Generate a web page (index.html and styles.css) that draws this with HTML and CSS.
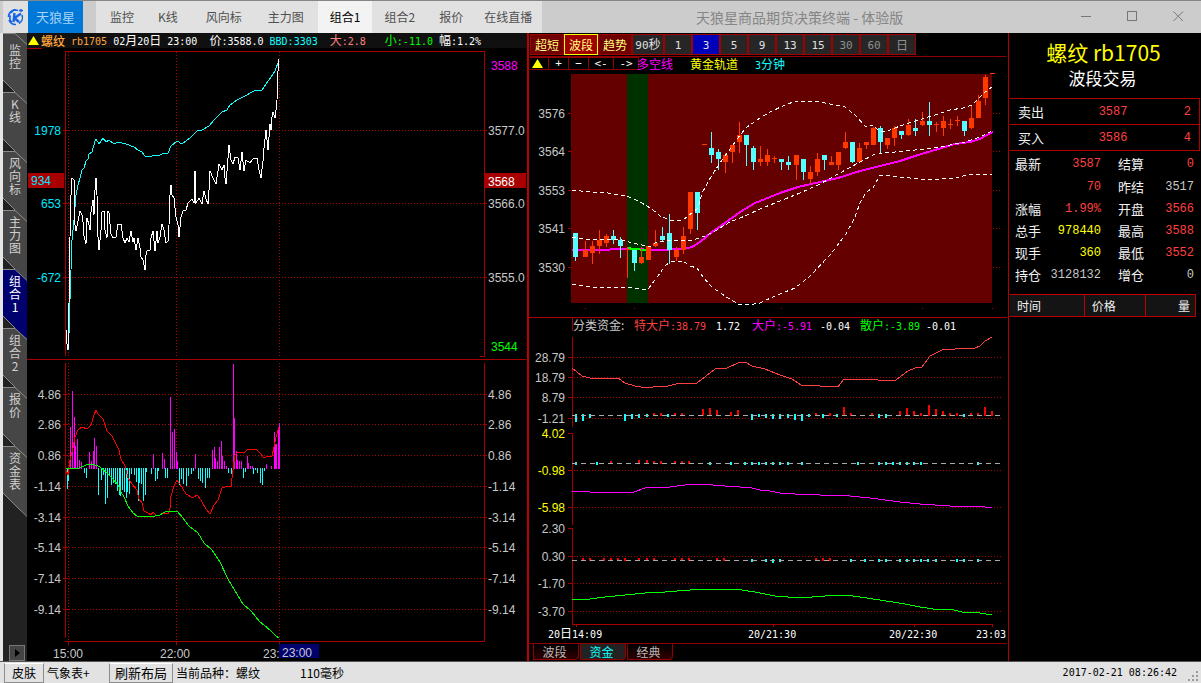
FILE: index.html
```html
<!DOCTYPE html>
<html lang="zh-CN">
<head>
<meta charset="utf-8">
<title>天狼星商品期货决策终端 - 体验版</title>
<link rel="stylesheet" href="styles.css">
</head>
<body>
<svg class="defs" aria-hidden="true">
  <symbol id="tab-shape" viewBox="0 0 24 59">
    <rect class="tab-gap" width="24" height="59"/>
    <path class="tab-body" d="M0 0H24V59H12L0 47Z"/>
    <path class="tab-prev" d="M12 0H24V11Z"/>
    <path class="tab-line" d="M0 47L12 59M0 .5H12L24 11.500"/>
  </symbol>
</svg>
<div class="app">
  <header class="titlebar">
    <div class="logo">
      <svg width="17" height="17" viewBox="0 0 17 17" aria-hidden="true">
        <g fill="none" stroke="#1464e6" stroke-width="1.600">
          <path d="M11 1.500A7 7 0 0 0 1.500 8M2 11A7 7 0 0 0 9 15.500"/>
          <path d="M12 14.500A7 7 0 0 0 15 6" />
          <path d="M9 .5A6 6 0 0 0 4 4M5 13.500A6 6 0 0 1 3.500 6.500"/>
          <path stroke-width="2.400" d="M7.500 4L6.500 13M14 4.500L7.500 9L12 13"/>
          <path stroke-width="1.300" d="M12 1.500H16M14 0V3"/>
        </g>
      </svg>
    </div>
    <button class="brand">天狼星</button>
    <nav class="menu">
      <button>监控</button><button>K线</button><button>风向标</button><button>主力图</button><button class="active">组合1</button><button>组合2</button><button>报价</button><button>在线直播</button>
    </nav>
    <h1 class="app-title">天狼星商品期货决策终端 - 体验版</h1>
    <div class="window-buttons">
      <button aria-label="最小化"><svg width="11" height="11"><path d="M0 5.500H10"/></svg></button>
      <button aria-label="最大化"><svg width="11" height="11"><path d="M.5 .5H9.500V9.500H.5Z"/></svg></button>
      <button aria-label="关闭"><svg class="smooth" width="11" height="11"><path d="M.5 .5L10 10M10 .5L.5 10"/></svg></button>
    </div>
  </header>

  <main class="workspace">
    <aside class="sidebar">
      <nav class="side-tabs">
        <button class="first"><svg><use href="#tab-shape"/></svg><span>监控</span></button>
        <button><svg><use href="#tab-shape"/></svg><span>K线</span></button>
        <button><svg><use href="#tab-shape"/></svg><span>风向标</span></button>
        <button><svg><use href="#tab-shape"/></svg><span>主力图</span></button>
        <button class="active"><svg><use href="#tab-shape"/></svg><span>组合1</span></button>
        <button class="after-active"><svg><use href="#tab-shape"/></svg><span>组合2</span></button>
        <button><svg><use href="#tab-shape"/></svg><span>报价</span></button>
        <button><svg><use href="#tab-shape"/></svg><span>资金表</span></button>
        <svg class="tab-tail" viewBox="0 0 24 14" aria-hidden="true"><path class="tab-body" d="M12 0H24V11Z"/><path class="tab-line" d="M12 0L24 11.500"/></svg>
      </nav>
      <button class="side-arrow" aria-label="展开"><svg width="5" height="8"><path d="M0 0L5 4L0 8Z"/></svg></button>
    </aside>

    <section class="pane trend-pane">
      <div class="quote-strip">
        <svg width="11" height="10" aria-hidden="true"><path fill="#ff0" d="M5.500 0L11 9H0Z"/></svg>
        <span class="orange strong">螺纹</span>
        <span class="orange"><b>rb1705</b></span>
        <span><b>02</b>月<b>20</b>日</span>
        <span><b>23:00</b></span>
        <span class="wide">价<b>:3588.0</b></span>
        <span class="cyan"><b>BBD:3303</b></span>
        <span class="wide pink">大<b>:2.8</b></span>
        <span class="wider green">小<b>:-11.0</b></span>
        <span>幅<b>:1.2%</b></span>
      </div>
      <svg class="chart" id="trend" viewBox="27 48 500 613" role="img" aria-label="分时走势"></svg>
    </section>

    <section class="pane kline-pane">
      <div class="periods">
        <button class="mode">超短</button><button class="mode on">波段</button><button class="mode">趋势</button><button class="seconds"><b>90</b>秒</button><button><b>1</b></button><button class="on"><b>3</b></button><button><b>5</b></button><button><b>9</b></button><button><b>13</b></button><button><b>15</b></button><button class="dim"><b>30</b></button><button class="dim"><b>60</b></button><button class="dim">日</button>
      </div>
      <div class="tools">
        <button class="narrow" aria-label="上移"><svg width="11" height="10"><path fill="#ff0" d="M5.500 0L11 9H0Z"/></svg></button><button>+</button><button>−</button><button class="long">&lt;-</button><button class="long">-&gt;</button>
        <span class="magenta">多空线</span><span class="yellow">黄金轨道</span><span class="cyan"><b>3</b>分钟</span>
      </div>
      <svg class="chart" id="kline" viewBox="529 70 479 573" role="img" aria-label="K线与分类资金">
        <g class="cjk">
          <text x="573" y="330" class="f-gray">分类资金:</text>
          <text x="634" y="330" class="f-red">特大户<tspan class="n">:38.79</tspan></text>
          <text x="716" y="330" class="f-white n">1.72</text>
          <text x="752" y="330" class="f-magenta">大户<tspan class="n">:-5.91</tspan></text>
          <text x="820" y="330" class="f-white n">-0.04</text>
          <text x="860" y="330" class="f-green">散户<tspan class="n">:-3.89</tspan></text>
          <text x="926" y="330" class="f-white n">-0.01</text>
          <text x="548" y="638" class="f-white"><tspan class="n">20</tspan>日<tspan class="n">14:09</tspan></text>
          <text x="748" y="638" class="f-white n">20/21:30</text>
          <text x="889" y="638" class="f-white n">20/22:30</text>
          <text x="976" y="638" class="f-white n">23:03</text>
        </g>
      </svg>
      <div class="bottom-tabs">
        <button>波段</button><button class="on">资金</button><button>经典</button>
      </div>
    </section>

    <section class="pane quote-pane">
      <h2>螺纹 rb1705</h2>
      <p class="subtitle">波段交易</p>
      <table class="book">
        <tr><th>卖出</th><td>3587</td><td>2</td></tr>
        <tr><th>买入</th><td>3586</td><td>4</td></tr>
      </table>
      <table class="stats">
        <tr class="tall"><th>最新</th><td>3587</td><th>结算</th><td>0</td></tr>
        <tr><th></th><td>70</td><th>昨结</th><td class="plain">3517</td></tr>
        <tr><th>涨幅</th><td>1.99%</td><th>开盘</th><td>3566</td></tr>
        <tr><th>总手</th><td class="yellow">978440</td><th>最高</th><td>3588</td></tr>
        <tr><th>现手</th><td class="yellow">360</td><th>最低</th><td>3552</td></tr>
        <tr><th>持仓</th><td class="plain">3128132</td><th>增仓</th><td class="plain">0</td></tr>
      </table>
      <table class="ticks">
        <tr><th>时间</th><th>价格</th><th>量</th></tr>
      </table>
    </section>
  </main>

  <footer class="statusbar">
    <button>皮肤</button>
    <span class="weather">气象表+</span>
    <button class="layout">刷新布局</button>
    <span class="symbol">当前品种：螺纹</span>
    <span>110毫秒</span>
    <time>2017-02-21 08:26:42</time>
    <svg class="grip" width="10" height="10" aria-hidden="true"><path d="M8 0h2v2h-2zM4 4h2v2h-2zM8 4h2v2h-2zM0 8h2v2h-2zM4 8h2v2h-2zM8 8h2v2h-2z"/></svg>
  </footer>
</div>
<script src="charts.js"></script>
</body>
</html>
```
FILE: styles.css
```css
* { box-sizing: border-box; }

body {
  margin: 0;
  background: #000;
  color: #fff;
  font: 12px/16px "Noto Sans CJK SC", sans-serif;
}

button {
  margin: 0;
  padding: 0;
  border: 0;
  background: none;
  color: inherit;
  font: inherit;
  white-space: nowrap;
}

b, .n {
  font-family: "DejaVu Sans Mono", monospace;
  font-size: 10px;
  font-weight: 400;
}

.defs { position: absolute; width: 0; height: 0; }

.app {
  display: flex;
  flex-direction: column;
  height: 100vh;
  overflow: hidden;
}

/* Title bar */
.titlebar {
  display: flex;
  flex: none;
  height: 33px;
  padding-left: 3px;
  border-top: 1px solid #858585;
  background: #ccc;
}
.logo {
  display: flex;
  align-items: center;
  justify-content: center;
  width: 25px;
  background: #e0e0e0;
}
.brand {
  width: 55px;
  margin-right: 13px;
  background: #0078d7;
  color: #a8d4f8;
  font-size: 13px;
}
.menu { display: flex; background: #e1e1e1; color: #505050; }
.menu button { padding: 0 12px; }
.menu button:nth-child(1) { padding-left: 14px; }
.menu button:nth-child(2) { padding-right: 16px; }
.menu button:nth-child(3) { padding-right: 14px; }
.menu button:nth-child(4) { padding-right: 14px; }
.menu button:nth-child(7) { padding-right: 9px; }
.menu button:nth-child(8) { padding-right: 10px; }
.menu .active { background: #f3f3f3; color: #000; }
.app-title {
  flex: 1;
  margin: 0;
  padding-right: 6px;
  color: #858585;
  font-size: 14px;
  font-weight: 400;
  line-height: 32px;
  text-align: center;
  white-space: nowrap;
}
.window-buttons { display: flex; }
.window-buttons button { width: 46px; }
.window-buttons path {
  fill: none;
  stroke: #777;
  shape-rendering: crispEdges;
}
.window-buttons .smooth path { shape-rendering: auto; }

/* Workspace */
.workspace {
  display: grid;
  flex: 1;
  grid-template-columns: 27px minmax(0, 500fr) minmax(0, 481fr) minmax(0, 193fr);
  min-height: 0;
}
.pane { display: flex; flex-direction: column; min-width: 0; min-height: 0; }
.chart { display: block; flex: 1; width: 100%; min-height: 0; }

/* Sidebar */
.sidebar {
  display: flex;
  flex-direction: column;
  justify-content: space-between;
  border-left: 3px solid #e6e6e6;
  background: #222;
  --tab-fill: #464646;
  --prev-fill: #464646;
}
.side-tabs { display: flex; flex-direction: column; }
.side-tabs button {
  display: grid;
  width: 24px;
  height: 59px;
  color: #d0d0d0;
}
.side-tabs button > * { grid-area: 1 / 1; }
.side-tabs button > svg { width: 24px; height: 59px; }
.side-tabs span {
  width: 14px;
  padding-top: 5px;
  margin: 0 auto;
  font-size: 12px;
  line-height: 13px;
  white-space: normal;
  word-break: break-all;
}
.side-tabs .first span { padding-top: 10px; }
.side-tabs .active { --tab-fill: #00006e; color: #fff; }
.side-tabs .after-active { --prev-fill: #00006e; }
.tab-tail { width: 24px; height: 14px; }
.tab-gap { fill: #222; }
.tab-body { fill: var(--tab-fill); }
.tab-prev { fill: var(--prev-fill); }
.tab-line { fill: none; stroke: #8c8c8c; }
.side-arrow {
  width: 16px;
  height: 16px;
  margin-left: 6px;
  border: 1px solid #777;
  background: #444;
  line-height: 0;
}
.side-arrow path { fill: #000; }

/* Trend pane */
.quote-strip {
  display: flex;
  flex: none;
  gap: 6px;
  align-items: center;
  height: 15px;
  padding: 1px 0 0 1px;
  background: #101010;
  white-space: nowrap;
}
.quote-strip svg + span { margin-left: -4px; }
.strong { font-weight: 500; }
.orange { color: #ffa73d; }
.cyan { color: #1ff; }
.pink { color: #ff8080; }
.green { color: #0f0; }
.magenta { color: #f0f; }
.yellow { color: #ff0; }
.quote-strip .wide { margin-left: 6px; }
.quote-strip .wider { margin-left: 13px; }

/* K-line pane */
.kline-pane { border-left: 2px solid #c00000; }
.periods {
  display: flex;
  flex: none;
  height: 23px;
  padding: 1px 0 1px 1px;
}
.periods button {
  width: 28px;
  border: 1px solid #a00000;
  background: #262626;
  color: #e0e0e0;
  line-height: 16px;
}
.periods b { font-size: 11px; }
.periods .on { background: #0000b8; }
.periods .dim { color: #909090; }
.periods .seconds { width: 32px; }
.periods .mode { width: 34px; background: #6e0000; color: #ffff80; }
.periods .mode.on { border-color: #ff0; background: #a00000; }
.tools {
  display: flex;
  flex: none;
  height: 14px;
  margin: 0 2px 0 1px;
  border-top: 1px solid #900000;
  line-height: 13px;
}
.tools button {
  width: 20px;
  border: 1px solid #900000;
  border-left: 0;
  font: 11px/10px "DejaVu Sans Mono", monospace;
}
.tools .narrow { width: 19px; line-height: 0; padding-right: 4px; }
.tools .long { width: 25px; }
.tools span { margin-right: 17px; }
.tools .magenta { margin-left: -2px; }
.bottom-tabs {
  display: flex;
  flex: none;
  gap: 1px;
  height: 18px;
  padding: 0 3px 1px;
  border-top: 1px solid #900000;
  margin: 0 2px 0 1px;
}
.bottom-tabs button {
  width: 46px;
  padding-right: 3px;
  border: 1px solid #900000;
  border-top: 0;
  border-bottom-right-radius: 4px;
  background: linear-gradient(#000, #300000);
  color: #b8b8b8;
  line-height: 14px;
}
.bottom-tabs .on { background: #222; color: #1ff; }

/* Chart marks */
.chart * { shape-rendering: crispEdges; }
.chart polyline { fill: none; stroke-width: 1; }
.axis { fill: none; stroke: #a80000; }
.grid { fill: none; stroke: #b00000; stroke-dasharray: 1 2; }
.zero { stroke: #aaa; stroke-dasharray: 5 4; }
.scale { font: 12px "Liberation Sans", sans-serif; }
.cjk { font: 12px "Noto Sans CJK SC", sans-serif; }
.f-gray { fill: #c8c8c8; }
.f-red { fill: #ff4040; }
.f-white { fill: #fff; }
.f-magenta { fill: #f0f; }
.f-green { fill: #0f0; }
.f-cyan { fill: #00e8ff; }
.f-yellow { fill: #ff0; }

/* Quote pane */
.quote-pane { padding-left: 1px; border-left: 1px solid #b00000; }
.quote-pane h2 {
  margin: 5px 0 0;
  padding-right: 4px;
  color: #ff0;
  font-size: 21px;
  font-weight: 400;
  line-height: 28px;
  text-align: center;
}
.subtitle {
  margin: 0 0 8px;
  padding-right: 6px;
  font-size: 17px;
  line-height: 24px;
  text-align: center;
}
.quote-pane table { border-collapse: collapse; table-layout: fixed; }
.quote-pane th {
  padding: 0;
  color: #f0f0f0;
  font-size: 13px;
  font-weight: 400;
  text-align: left;
}
.quote-pane td {
  padding: 0;
  color: #ff4040;
  font: 12px/16px "Liberation Mono", monospace;
  text-align: right;
}
.quote-pane td.plain { color: #c8c8c8; }
.quote-pane td.yellow { color: #ff0; }
.book { margin-right: 1px; }
.book tr { height: 26px; border: 1px solid #b00000; border-left: 0; }
.book th { width: 35%; padding-left: 8px; }
.quote-pane .book td:last-child { padding-right: 8px; }
.book td:nth-child(2) { width: 27%; }
.stats { margin: 1px 7px 0 5px; }
.stats tr { height: 22px; }
.stats .tall { height: 24px; }
.stats th:first-child { width: 20%; }
.quote-pane .stats th:nth-child(3) { width: 36%; padding-left: 17px; }
.stats td:nth-child(2) { width: 28%; }
.ticks { margin: 8px 5px 0 0; background: #141414; }
.ticks tr { height: 22px; }
.quote-pane .ticks th { border: 1px solid #c00000; border-left: 0; padding: 0 7px; font-size: 12px; }
.ticks th:nth-child(1) { width: 40%; }
.ticks th:nth-child(2) { width: 33%; }
.quote-pane .ticks th:nth-child(3) { padding-right: 5px; text-align: right; }

/* Status bar */
.statusbar {
  display: flex;
  flex: none;
  align-items: center;
  height: 22px;
  padding: 0 3px 0 4px;
  border-top: 1px solid #555;
  background: #e2e2e2;
  color: #000;
  white-space: nowrap;
}
.statusbar button {
  width: 40px;
  height: 20px;
  border: 1px solid #8c8c8c;
  border-top-color: #fff;
  line-height: 16px;
}
.statusbar .weather { width: 62px; margin-left: 3px; }
.statusbar .layout { width: 64px; margin-right: 3px; font-size: 13px; }
.statusbar .symbol { width: 124px; }
.statusbar time {
  margin-left: auto;
  font: 10px "DejaVu Sans Mono", monospace;
}
.grip { align-self: flex-end; margin: 0 0 2px 11px; }
.grip path { fill: #999; }
```
FILE: charts.js
```js
const NS = 'http://www.w3.org/2000/svg';

function add(parent, tag, attrs, text) {
  const el = document.createElementNS(NS, tag);
  for (const key in attrs) el.setAttribute(key, attrs[key]);
  if (text) el.textContent = text;
  parent.appendChild(el);
  return el;
}
const line = (svg, points, stroke, extra) =>
  add(svg, 'polyline', Object.assign({ points, stroke }, extra));
const box = (svg, x, y, width, height, fill) =>
  add(svg, 'rect', { x, y, width, height, fill });
const label = (svg, x, y, text, cls, anchor) =>
  add(svg, 'text', { x, y: y + 5, class: 'scale ' + cls, 'text-anchor': anchor || 'start' }, text);
const path = (svg, d, cls) => add(svg, 'path', { d, class: cls });

/* Intraday trend */
const t = document.getElementById('trend');
path(t, 'M68.5 52V356M176.5 52V356M279.5 52V356M68.5 363V641M176.5 363V641M279.5 363V641', 'grid');
[130, 203, 277, 394, 424, 455, 486, 517, 547, 578, 609].forEach(y => {
  path(t, `M66 ${y}.5H484`, 'grid');
  path(t, `M63 ${y}.5H68M484 ${y}.5H487`, 'axis');
});
path(t, 'M27 48.5H42M65.5 356V51.5H484.5V356.5H480M27 359.5H526M65.5 363V638M484.500 363V641M65 641.5H485M68.5 641V645M176.5 641V645M279.5 641V645', 'axis');

const upBars = [[70,427],[72,391],[74,417],[75,446],[77,439],[79,460],[81,462],[89,452],[91,461],[93,451],[94,438],[96,446],[153,454],[162,453],[164,459],[170,397],[172,432],[174,429],[176,452],[177,461],[195,454],[212,450],[214,447],[215,458],[217,461],[219,447],[221,441],[222,456],[224,461],[226,466],[233,364],[234,418],[236,451],[237,460],[239,461],[241,461],[247,456],[248,463],[250,466],[252,466],[266,464],[271,466],[274,432],[275,444],[276,444],[278,430],[279,423]];
upBars.forEach(([x, y]) => box(t, x, y, 1, 469 - y, '#f0f'));
const downBars = [[67,489],[68,481],[84,473],[86,478],[98,495],[101,480],[103,475],[105,504],[107,498],[109,475],[111,485],[113,483],[115,484],[117,491],[119,495],[120,496],[122,490],[124,492],[126,498],[127,492],[129,494],[131,474],[134,475],[136,482],[138,501],[139,483],[141,484],[143,501],[145,495],[146,472],[151,474],[155,481],[157,479],[158,471],[165,478],[167,478],[179,485],[181,479],[183,484],[186,486],[188,476],[191,474],[193,471],[198,479],[200,481],[202,483],[205,488],[207,478],[209,478],[228,473],[231,474],[243,478],[245,472],[253,474],[255,470],[257,473],[260,483],[262,485],[264,471]];
downBars.forEach(([x, y]) => box(t, x, 468, 1, y - 468, '#1ff'));

line(t, '68,350 69,333 70,300 71,270 72,240 74,220 76,195 78,185 80,178 82,170 84,168 86,161 88,159 89,154 92,152 95,141 96,139 99,144 101,141 103,138 106,142 109,140 114,144 118,142 122,143 126,144 134,147 138,150 142,152 145,156 150,157 154,155 158,156 162,154 168,153 171,146 177,141 182,144 190,138 197,131 202,130 209,126 215,119 222,112 227,110 230,105 237,100 245,96 254,91 262,90 266,84 271,77 275,71 279,60', '#1ff');
line(t, '66,330 67,344 68,350 69,304 70,237 71,195 72,178 74,180 75,225 76,231 78,221 80,211 82,215 83,222 84,236 86,244 87,218 89,225 90,230 91,212 93,200 94,215 95,190 96,178 97,195 98,237 99,250 101,230 102,212 104,211 105,230 107,238 108,211 109,213 111,234 113,238 116,237 118,224 121,224 123,238 125,243 127,238 129,242 131,231 133,242 134,238 136,250 138,238 140,248 141,257 143,260 145,270 146,255 147,251 150,250 151,238 153,231 155,251 157,231 158,243 160,237 162,224 164,230 166,243 168,241 169,225 170,195 171,185 172,195 174,198 176,217 178,225 179,237 181,217 183,211 186,210 188,203 192,199 194,203 195,171 196,203 199,198 202,204 204,191 206,199 208,204 209,190 210,171 213,178 216,184 218,171 219,164 222,170 224,165 225,178 226,184 228,158 229,145 231,160 233,164 235,157 238,158 240,170 242,152 244,171 246,160 250,163 253,159 257,158 259,170 261,178 263,161 264,148 266,130 268,150 270,124 271,130 272,117 273,112 275,118 276,110 277,100 278,71 279,59', '#fff');
line(t, '66,470 68,475 70,460 71,456 73,448 75,437 78,430 82,427 87,429 91,425 94,415 96,410 98,414 103,419 107,431 112,436 116,444 119,450 121,459 125,466 128,478 132,484 137,490 139,499 142,503 144,511 148,513 151,515 153,512 156,515 159,516 162,513 168,514 170,508 171,496 174,486 177,480 180,484 186,494 193,498 197,495 201,500 206,509 210,514 214,505 218,500 222,488 228,486 231,487 233,470 235,455 238,452 244,453 248,449 256,449 260,453 264,458 268,456 272,456 274,447 276,437 279,427', '#f00');
line(t, '66,468 79,468 86,465 93,464 100,467 107,473 112,478 118,485 121,492 124,497 128,506 133,513 137,516 142,516 150,517 160,515 165,512 177,511 183,518 189,526 198,533 204,543 212,550 220,562 228,579 235,591 243,604 251,611 260,622 264,625 271,631 276,636 279,638', '#0f0');

[[130, '1978'], [203, '653'], [277, '-672']].forEach(([y, s]) => label(t, 61, y, s, 'f-cyan', 'end'));
box(t, 28, 173, 36, 15, '#a80000');
label(t, 31, 180, '934', 'f-cyan');
[[130, '3577.0'], [203, '3566.0'], [277, '3555.0']].forEach(([y, s]) => label(t, 488, y, s, 'f-gray'));
box(t, 485, 173, 41, 15, '#a80000');
label(t, 488, 181, '3568', 'f-white');
label(t, 491, 65, '3588', 'f-magenta');
label(t, 491, 346, '3544', 'f-green');
[[394, '4.86'], [424, '2.86'], [455, '0.86'], [486, '-1.14'], [517, '-3.14'], [547, '-5.14'], [578, '-7.14'], [609, '-9.14']].forEach(([y, s]) => {
  label(t, 61, y, s, 'f-gray', 'end');
  label(t, 488, y, s, 'f-gray');
});
label(t, 53, 653, '15:00', 'f-gray');
label(t, 160, 653, '22:00', 'f-gray');
label(t, 263, 653, '23:', 'f-gray');
box(t, 279, 644, 40, 14, '#00006e');
label(t, 282, 652, '23:00', 'f-gray');

/* Candles with channel */
const k = document.getElementById('kline');
box(k, 571, 74, 421, 229, '#640000');
box(k, 627, 74, 21, 229, '#003200');
[[113, '3576'], [151, '3564'], [190, '3553'], [228, '3541'], [267, '3530']].forEach(([y, s]) => {
  label(k, 565, y, s, 'f-gray', 'end');
  path(k, `M568 ${y}.5H571`, 'axis');
  path(k, `M993 ${y}.5H1001`, 'grid');
});
[585, 634, 781, 922, 992].forEach(x => box(k, x, 308, 1, 1, '#a80000'));

line(k, '572,250 606,250 614,249 633,249 655,250 683,249 692,247 700,242 712,232 725,223 740,212 755,203 770,197 780,193 798,187 820,182 838,178 860,171 880,166 900,161 915,156 935,150 955,144 970,142 980,139 985,136 993,132', '#f0f', { style: 'stroke-width:2' });
line(k, '627,248 634,249 646,250', '#0f0', { style: 'stroke-width:2' });

/* x, rising, high, body top, body bottom, low */
const candles = [[575,0,233,233,257,261],[585,1,241,250,257,257],[592,1,241,246,253,264],[599,1,230,240,246,254],[606,1,234,236,243,247],[613,0,230,236,240,244],[620,0,237,240,246,258],[627,1,247,249,250,278],[634,0,250,250,263,271],[641,1,247,257,263,264],[648,1,246,246,260,260],[655,1,230,243,246,247],[662,0,227,236,240,241],[669,0,214,233,250,264],[676,1,247,250,257,261],[683,1,227,236,250,254],[690,1,192,192,229,234],[697,0,192,192,213,230],[704,1,144,144,145,145],[711,0,132,148,155,163],[718,0,149,152,159,170],[725,1,153,155,162,173],[732,1,145,145,152,163],[739,1,122,135,142,153],[746,0,135,135,145,166],[753,0,146,148,162,170],[760,1,146,159,162,166],[767,1,149,155,162,166],[774,1,156,158,159,163],[781,0,159,159,162,170],[788,0,156,162,165,170],[796,1,155,155,165,180],[803,0,159,159,172,180],[810,1,166,172,179,184],[817,1,153,159,172,176],[824,0,155,155,160,170],[831,1,156,162,165,165],[838,1,152,152,165,170],[845,1,132,142,148,149],[852,0,142,142,162,163],[859,1,143,148,162,163],[866,1,142,142,145,149],[873,1,127,128,145,145],[880,0,126,128,142,153],[887,1,138,138,145,149],[894,1,126,128,138,146],[901,0,131,131,135,139],[908,1,119,125,135,136],[915,0,119,128,131,136],[922,1,112,121,125,126],[929,0,102,121,125,136],[936,1,122,124,125,132],[943,1,116,121,128,136],[950,1,119,124,125,129],[957,1,116,120,121,126],[964,0,121,121,131,136],[971,1,106,118,128,129],[978,1,95,101,118,118],[985,1,75,77,98,105],[992,1,73,73,74,74]];
candles.forEach(([x, up, high, top, bottom, low]) => {
  const color = up ? '#ff3800' : '#5ff';
  if (low - high > 1) box(k, x, high, 1, low - high, color);
  box(k, x - 2, top, 5, bottom - top, color);
});
[
  '572,190 590,192 608,193 627,196 640,202 652,209 660,216 670,220 683,220 687,217 698,208 702,193 712,175 720,163 733,145 740,135 747,127 760,118 770,112 785,105 796,101 815,101 830,104 845,107 855,115 866,127 873,125 880,132 888,131 900,126 915,121 935,115 950,110 963,108 972,105 980,97 985,92 992,87',
  '572,237 585,239 606,239 622,240 632,243 642,245 650,247 655,243 668,240 690,241 705,236 715,231 730,222 745,216 760,209 780,201 800,193 820,184 840,173 860,162 873,155 885,153 905,151 925,149 945,146 965,142 980,137 992,131',
  '572,284 590,287 627,287 640,289 648,289 655,280 665,266 670,262 683,261 690,266 697,268 703,277 712,287 725,296 738,304 748,305 760,303 775,296 795,288 810,276 830,255 846,234 855,217 860,203 866,192 873,188 880,175 900,177 930,180 955,178 971,174 992,175'
].forEach(points => line(k, points, '#fff', { 'stroke-dasharray': '4 3' }));

/* Money flow */
path(k, 'M529 317.5H1007M572.5 318V331M572.5 337V427M572.5 433V525M572.5 528V624.5H992.5V627M576.5 624V627M773.5 624V627M914.500 624V627', 'axis');
[[357, '28.79'], [377, '18.79'], [397, '8.79'], [418, '-1.21'], [433, '4.02'], [470, '-0.98'], [507, '-5.98'], [528, '2.30'], [556, '0.30'], [583, '-1.70'], [611, '-3.70']].forEach(([y, s], i) => {
  label(k, 565, y, s, i > 3 && i < 7 ? 'f-yellow' : 'f-gray', 'end');
  path(k, `M568 ${y}.5H572`, 'axis');
  if (i !== 4 && i !== 7) path(k, `M574 ${y}.5H1001`, 'grid');
});

function bars(list, from, color) {
  list.forEach(([x, to]) => box(k, x - 1, Math.min(from, to), 2, Math.abs(to - from), color));
}
const same = (xs, y) => xs.map(x => [x, y]);
bars([[576,422],[583,421],[590,418],[625,421],[632,419],[639,418],[647,417],[668,417],[752,420],[759,417],[766,418],[773,419],[780,419],[788,418],[795,420],[802,421],[809,417],[823,418],[837,417],[879,418],[886,418],[964,417]], 414, '#1ff');
bars([[654,413],[661,413],[675,413],[682,413],[703,409],[710,408],[717,410],[731,412],[738,410],[816,413],[830,413],[844,407],[851,413],[872,413],[900,411],[907,408],[914,411],[921,413],[929,405],[936,409],[943,411],[950,413],[957,413],[971,413],[978,413],[985,407],[992,411]], 416, '#f00');
bars(same([576,597,710,731,745,752,759,766,773,780,788,802,858,879,886,893,900,907,914,921,978], 465), 462, '#1ff');
bars([[611,461],[639,460],[647,460],[654,461],[661,461],[675,461],[682,461],[689,461]], 464, '#f00');
bars(same([583,590,604,611,618,625,639,647,654,675,682,689,717,724,816,823,830], 558), 561, '#f00');
bars(same([752,766,780,851,865,879,886,900,907,914,921,928,936,957,964,978], 562).concat([[773, 563]]), 559, '#1ff');
[415, 463, 560].forEach(y => path(k, `M572 ${y}.5H1001`, 'zero'));

line(k, '572,368 582,376 590,378 600,379 618,378 625,383 635,386 647,388 660,386 668,386 680,383 697,383 706,376 715,369 727,368 738,363 745,362 752,366 765,369 780,375 792,379 801,385 808,386 815,385 825,387 830,386 838,387 844,379 870,379 885,381 896,380 908,371 915,368 922,367 930,356 942,350 955,349 975,348 980,346 985,341 992,337', '#ff4040');
line(k, '572,491 590,492 604,493 612,492 634,492 645,488 655,487 670,487 685,485 700,484 725,486 740,487 752,488 760,490 770,491 780,493 795,494 820,495 850,496 870,498 885,500 900,502 920,504 950,506 975,506 985,507 992,508', '#f0f');
line(k, '572,599 590,599 605,597 625,595 645,593 665,592 690,590 715,589 735,589 755,592 775,596 800,598 825,596 845,595 860,597 880,600 905,604 920,607 940,610 950,609 962,612 980,613 992,615', '#0f0');
```
